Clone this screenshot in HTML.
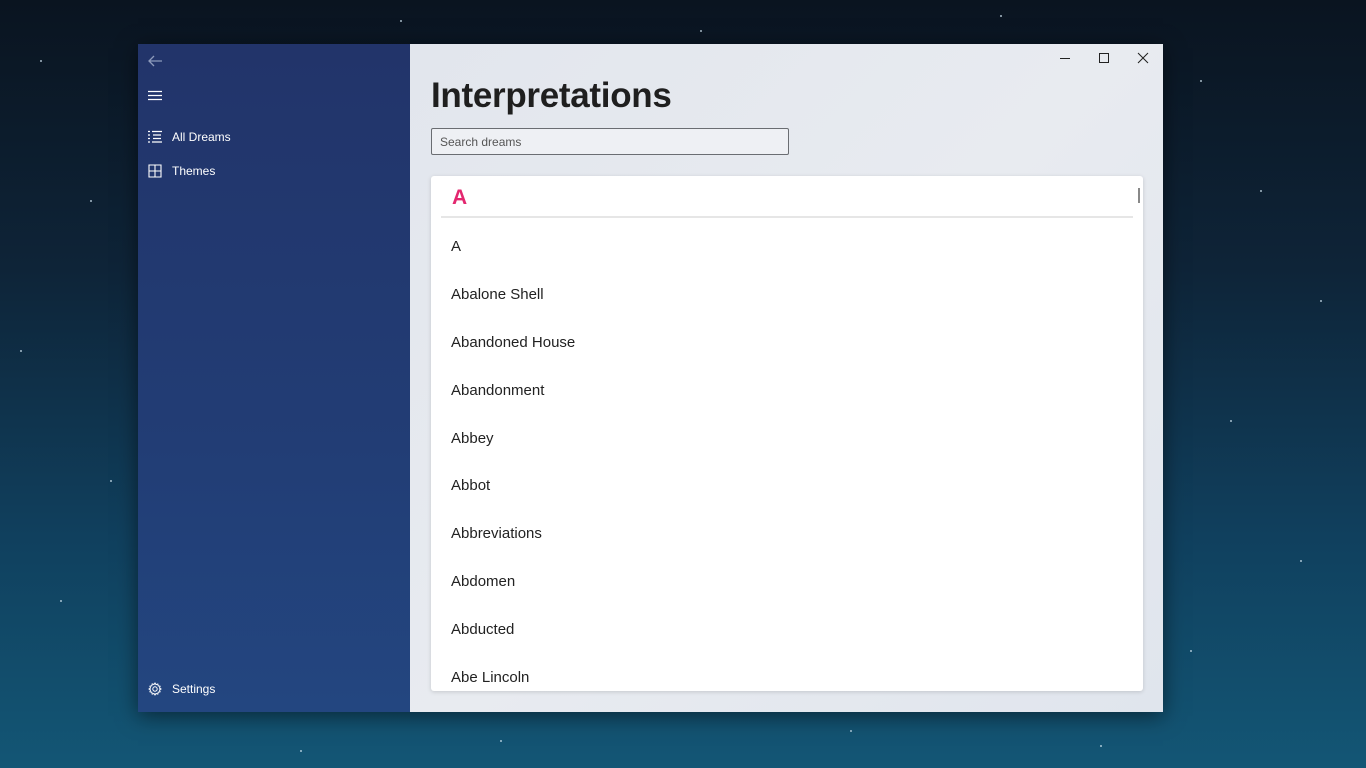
<!DOCTYPE html>
<html><head><meta charset="utf-8"><style>
*{margin:0;padding:0;box-sizing:border-box}
body{width:1366px;height:768px;overflow:hidden;font-family:"Liberation Sans","DejaVu Sans",sans-serif;background:linear-gradient(180deg,#0a1420 0%,#0e2438 35%,#10405e 70%,#135675 100%);position:relative}
.star{position:absolute;width:2px;height:2px;background:#cfe3f0;border-radius:1px;opacity:.8}
.win{position:absolute;left:138px;top:44px;width:1025px;height:668px;box-shadow:0 4px 20px rgba(0,0,0,.5)}
.side{position:absolute;left:0;top:0;width:272px;height:668px;background:linear-gradient(180deg,#22346a 0%,#223d75 60%,#234680 100%);color:#fff}
.main{position:absolute;left:272px;top:0;width:753px;height:668px;background:linear-gradient(135deg,#e2e6ed,#e8ebf0 50%,#e0e5ed)}
.nav{position:absolute;left:10px;font-size:12px;display:flex;align-items:center}
.nav span{margin-left:10px}
h1{position:absolute;left:21px;top:32px;font-size:35px;font-weight:bold;color:#1f1f1f;letter-spacing:-.3px}
.search{position:absolute;left:21px;top:84px;width:358px;height:27px;border:1px solid #6a6d72;border-radius:2px;background:#eef0f4;font-size:12px;color:#555;padding:6px 8px}
.card{position:absolute;left:21px;top:132px;width:712px;height:515px;background:#fff;border-radius:3px;box-shadow:0 1px 4px rgba(0,0,0,.15);overflow:hidden}
.hdr{position:absolute;left:21px;top:10px;font-size:21px;font-weight:bold;color:#e3276f}
.div{position:absolute;left:10px;top:40px;width:692px;height:2px;background:#e6e6e6}
.item{position:absolute;left:20px;font-size:15px;color:#222}
.sb{position:absolute;left:707px;top:12px;width:2px;height:15px;background:#888}
.ctl{position:absolute;top:8px;color:#222}
</style></head><body>
<div class="star" style="left:40px;top:60px"></div><div class="star" style="left:90px;top:200px"></div><div class="star" style="left:20px;top:350px"></div><div class="star" style="left:110px;top:480px"></div><div class="star" style="left:60px;top:600px"></div><div class="star" style="left:1200px;top:80px"></div><div class="star" style="left:1260px;top:190px"></div><div class="star" style="left:1320px;top:300px"></div><div class="star" style="left:1230px;top:420px"></div><div class="star" style="left:1300px;top:560px"></div><div class="star" style="left:1190px;top:650px"></div><div class="star" style="left:400px;top:20px"></div><div class="star" style="left:700px;top:30px"></div><div class="star" style="left:1000px;top:15px"></div><div class="star" style="left:500px;top:740px"></div><div class="star" style="left:850px;top:730px"></div><div class="star" style="left:300px;top:750px"></div><div class="star" style="left:1100px;top:745px"></div>
<div class="win">
<div class="side">
<svg style="position:absolute;left:9px;top:10px" width="16" height="14" viewBox="0 0 16 14"><path d="M15 7H2M7 2L2 7l5 5" stroke="#8d9abb" stroke-width="1.3" fill="none"/></svg>
<svg style="position:absolute;left:10px;top:46px" width="14" height="12"><path d="M0 1.5h14M0 5.5h14M0 9.5h14" stroke="#fff" stroke-width="1.2"/></svg>
<div class="nav" style="top:86px"><svg width="14" height="14"><path d="M0 1.5h2M0 5h2M0 8.5h2M0 12h2M4 1.5h10M5 5h8M5 8.5h8M4 12h10" stroke="#fff" stroke-width="1.2"/></svg><span>All Dreams</span></div>
<div class="nav" style="top:120px"><svg width="14" height="14"><path d="M1 1h12v12H1zM7 1v12M1 7h12" stroke="#fff" stroke-width="1.1" fill="none"/></svg><span>Themes</span></div>
<div class="nav" style="top:638px"><svg width="14" height="14" viewBox="0 0 14 14"><circle cx="7" cy="7" r="2.2" stroke="#fff" fill="none"/><path d="M7 1l1 1.6 1.8-.6.4 1.9 1.9.4-.6 1.8L13 7l-1.5 1 .6 1.8-1.9.4-.4 1.9-1.8-.6L7 13l-1-1.5-1.8.6-.4-1.9-1.9-.4.6-1.8L1 7l1.5-1-.6-1.8 1.9-.4.4-1.9 1.8.6z" stroke="#fff" fill="none" stroke-width="1"/></svg><span>Settings</span></div>
</div>
<div class="main">
<svg class="ctl" style="left:649px" width="12" height="12"><path d="M1 6.5h10" stroke="#222"/></svg>
<svg class="ctl" style="left:688px" width="12" height="12"><rect x="1.5" y="1.5" width="9" height="9" stroke="#222" fill="none"/></svg>
<svg class="ctl" style="left:727px" width="12" height="12"><path d="M1 1l10 10M11 1L1 11" stroke="#222"/></svg>
<h1>Interpretations</h1>
<div class="search">Search dreams</div>
<div class="card">
<div class="hdr">A</div><div class="div"></div><div class="sb"></div>
<div class="item" style="top:62px">A</div>
<div class="item" style="top:110px">Abalone Shell</div>
<div class="item" style="top:158px">Abandoned House</div>
<div class="item" style="top:206px">Abandonment</div>
<div class="item" style="top:254px">Abbey</div>
<div class="item" style="top:301px">Abbot</div>
<div class="item" style="top:349px">Abbreviations</div>
<div class="item" style="top:397px">Abdomen</div>
<div class="item" style="top:445px">Abducted</div>
<div class="item" style="top:493px">Abe Lincoln</div>
</div>
</div>
</div>
</body></html>
